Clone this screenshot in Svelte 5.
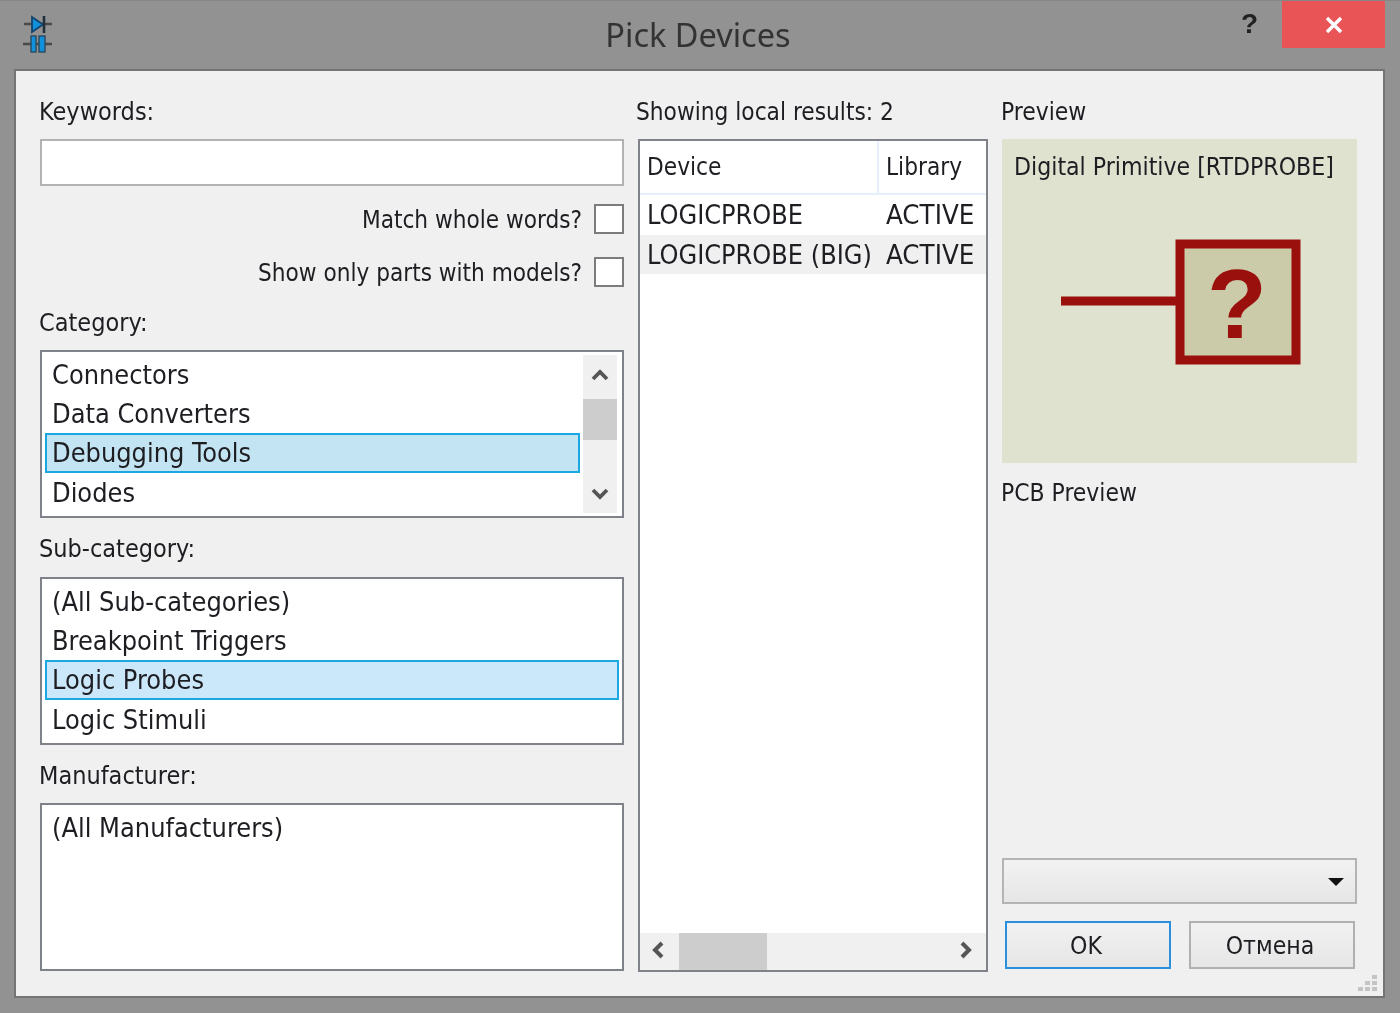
<script>
  const categories = ['Connectors', 'Data Converters', 'Debugging Tools', 'Diodes'];
  const subs = ['(All Sub-categories)', 'Breakpoint Triggers', 'Logic Probes', 'Logic Stimuli'];
</script>

<div class="screen">
  <header class="titlebar">
    <svg class="appicon" width="32" height="40" viewBox="0 0 32 40">
      <path d="M2 10H30M1 30H30" stroke="#4a4a4a" stroke-width="2.6" fill="none"/>
      <path d="M10 3L21 10.5L10 18Z" fill="#1190dc" stroke="#12456e" stroke-width="1.8"/>
      <path d="M22 2V19" stroke="#20303e" stroke-width="2.6"/>
      <rect x="9" y="22" width="5" height="16" fill="#1190dc" stroke="#2c4a60" stroke-width="1.4"/>
      <rect x="17" y="22" width="6" height="16" fill="#1190dc" stroke="#2c4a60" stroke-width="1.4"/>
    </svg>
    <h1>Pick Devices</h1>
    <span class="help">?</span>
    <button class="close" aria-label="Close">
      <svg width="20" height="20" viewBox="0 0 20 20"><path d="M3 3L17 17M17 3L3 17" stroke="#fff" stroke-width="3.4"/></svg>
    </button>
  </header>

  <main class="dialog">
    <section class="left">
      <div class="label">Keywords:</div>
      <input class="search" type="text" />
      <div class="check first"><span>Match whole words?</span><i class="box"></i></div>
      <div class="check second"><span>Show only parts with models?</span><i class="box"></i></div>

      <div class="label cat">Category:</div>
      <div class="list tight">
        <div class="rows narrow">
          {#each categories as c, i}
            <div class="row" class:sel={i === 2} class:selalt={i === 2}>{c}</div>
          {/each}
        </div>
        <div class="vscroll">
          <svg width="18" height="14" viewBox="0 0 18 14"><path d="M2 11L9 4L16 11" fill="none" stroke="#555" stroke-width="3.8"/></svg>
          <div class="vthumb"></div>
          <svg class="down" width="18" height="14" viewBox="0 0 18 14"><path d="M2 3L9 10L16 3" fill="none" stroke="#555" stroke-width="3.8"/></svg>
        </div>
      </div>

      <div class="label sub">Sub-category:</div>
      <div class="list">
        <div class="rows">
          {#each subs as s, i}
            <div class="row" class:sel={i === 2}>{s}</div>
          {/each}
        </div>
      </div>

      <div class="label man">Manufacturer:</div>
      <div class="list tight">
        <div class="rows"><div class="row">(All Manufacturers)</div></div>
      </div>
    </section>

    <section class="middle">
      <div class="label shift">Showing local results: 2</div>
      <div class="table">
        <div class="thead">
          <div class="c1">Device</div>
          <div class="c2">Library</div>
        </div>
        <div class="trow"><div class="c1">LOGICPROBE</div><div class="c2">ACTIVE</div></div>
        <div class="trow alt"><div class="c1">LOGICPROBE (BIG)</div><div class="c2">ACTIVE</div></div>
        <div class="tfill"></div>
        <div class="hscroll">
          <svg width="16" height="20" viewBox="0 0 16 20"><path d="M12 3L5 10L12 17" fill="none" stroke="#555" stroke-width="4"/></svg>
          <div class="hthumb"></div>
          <svg class="right-arrow" width="16" height="20" viewBox="0 0 16 20"><path d="M4 3L11 10L4 17" fill="none" stroke="#555" stroke-width="4"/></svg>
        </div>
      </div>
    </section>

    <section class="right">
      <div class="label">Preview</div>
      <div class="preview">
        <div class="ptitle">Digital Primitive [RTDPROBE]</div>
        <svg class="symbol" width="245" height="130" viewBox="0 0 245 130">
          <rect x="120" y="5" width="116" height="116" fill="#cbcbaa" stroke="#9a100c" stroke-width="9"/>
          <path d="M1 62H118" stroke="#9a100c" stroke-width="9"/>
          <text x="177" y="99" text-anchor="middle" class="q">?</text>
        </svg>
      </div>
      <div class="label pcb">PCB Preview</div>
      <div class="spacer"></div>
      <div class="combo"><i class="caret"></i></div>
      <div class="buttons">
        <button class="btn ok">OK</button>
        <button class="btn">Отмена</button>
      </div>
    </section>

    <svg class="grip" width="20" height="16" viewBox="0 0 20 16">
      <g fill="#c4c4c4">
        <rect x="14" y="0" width="5" height="4"/>
        <rect x="7" y="6" width="5" height="4"/><rect x="14" y="6" width="5" height="4"/>
        <rect x="0" y="12" width="5" height="4"/><rect x="7" y="12" width="5" height="4"/><rect x="14" y="12" width="5" height="4"/>
      </g>
    </svg>
  </main>
</div>

<style>
  :global(body) { margin: 0; background: #929292; }
  .screen {
    width: 1400px;
    height: 1013px;
    background: #929292;
    font-family: "DejaVu Sans", "Noto Sans", sans-serif;
    font-stretch: condensed;
    font-size: 25px;
    color: #1d1d22;
    overflow: hidden;
    display: flex;
    flex-direction: column;
    filter: blur(0.4px);
  }
  .titlebar {
    height: 69px;
    flex: none;
    position: relative;
    display: flex;
    justify-content: center;
    align-items: center;
    border-top: 1px solid #868686;
    box-sizing: border-box;
  }
  .appicon { position: absolute; left: 22px; top: 13px; }
  h1 {
    margin: -2px 0 0 -4px;
    font: 400 32.5px "Noto Sans", sans-serif;
    color: #333;
  }
  .help {
    position: absolute;
    left: 1241px;
    top: 7px;
    font: 700 28px "Liberation Sans", sans-serif;
    color: #222;
  }
  .close {
    position: absolute;
    left: 1282px;
    top: 0;
    width: 103px;
    height: 47px;
    padding: 0;
    border: none;
    background: #e95457;
    display: flex;
    align-items: center;
    justify-content: center;
  }
  .dialog {
    position: relative;
    flex: none;
    width: 1371px;
    height: 929px;
    margin-left: 14px;
    box-sizing: border-box;
    border: 2px solid #747474;
    background: #f0f0f0;
    padding: 25px 0 0 24px;
    display: grid;
    grid-template-columns: 584px 350px 356px;
    column-gap: 14px;
    grid-template-rows: 876px;
  }
  .left, .middle, .right { display: flex; flex-direction: column; min-width: 0; }
  .label { height: 32px; line-height: 32px; margin-left: -1px; flex: none; }
  .middle .label.shift { margin-left: -2px; font-size: 24.2px; }
  .right .label { margin-left: -1px; font-size: 24.4px; }
  .search {
    display: block;
    box-sizing: border-box;
    width: 584px;
    height: 47px;
    margin: 11px 0 0;
    border: 2px solid #b2b2b2;
    background: #fff;
    flex: none;
  }
  .check {
    display: flex;
    justify-content: flex-end;
    align-items: center;
    gap: 12px;
    height: 30px;
    flex: none;
    font-size: 24.1px;
  }
  .check span { padding-top: 2px; }
  .check.first { margin-top: 18px; }
  .check.second { margin-top: 23px; }
  .box {
    width: 30px;
    height: 30px;
    box-sizing: border-box;
    border: 2px solid #7c7c7c;
    background: #fff;
    flex: none;
  }
  .cat { margin-top: 20px; }
  .sub { margin-top: 15px; }
  .man { margin-top: 15px; }
  .list {
    position: relative;
    display: flex;
    box-sizing: border-box;
    height: 168px;
    margin-top: 12px;
    border: 2px solid #7f8389;
    background: #fff;
    padding: 3px;
    flex: none;
    font-size: 26.9px;
  }
  .list.tight { margin-top: 11px; }
  .rows { flex: 1; min-width: 0; }
  .rows.narrow { flex: none; width: 535px; }
  .row {
    box-sizing: border-box;
    height: 39.2px;
    line-height: 39px;
    padding-left: 7px;
  }
  .row.sel {
    background: #cbe7fa;
    outline: 2px solid #1aa7e2;
    outline-offset: -2px;
  }
  .row.selalt { background: #c3e4f2; }
  .vscroll {
    width: 34px;
    margin-left: 3px;
    background: #f0f0f0;
    display: flex;
    flex-direction: column;
    align-items: center;
    padding-top: 13px;
    box-sizing: border-box;
  }
  .vthumb { width: 100%; height: 41px; background: #cdcdcd; margin-top: 17px; }
  .vscroll .down { margin-top: auto; margin-bottom: 12px; }
  .table {
    box-sizing: border-box;
    flex: 1;
    margin-top: 11px;
    border: 2px solid #7f8389;
    background: #fff;
    display: flex;
    flex-direction: column;
    min-height: 0;
  }
  .thead {
    height: 52px;
    flex: none;
    display: flex;
    align-items: stretch;
    line-height: 52px;
    border-bottom: 2px solid #e6f0fa;
    font-size: 24.2px;
  }
  .thead .c1 { border-right: 2px solid #e6f0fa; box-sizing: border-box; }
  .c1 { width: 239px; padding-left: 7px; box-sizing: border-box; white-space: nowrap; }
  .c2 { padding-left: 7px; white-space: nowrap; }
  .trow { display: flex; height: 39.5px; line-height: 40px; flex: none; font-size: 26.8px; }
  .trow .c2 { padding-left: 7px; font-size: 27.4px; }
  .trow.alt { background: #f0f0f0; }
  .tfill { flex: 1; }
  .hscroll {
    height: 37px;
    flex: none;
    background: #f0f0f0;
    display: flex;
    align-items: center;
    padding-left: 10px;
    padding-right: 12px;
  }
  .hscroll svg { margin-top: -4px; }
  .hthumb { width: 88px; height: 100%; background: #cdcdcd; margin-left: 13px; }
  .right-arrow { margin-left: auto; }
  .preview {
    position: relative;
    box-sizing: border-box;
    height: 324px;
    width: 355px;
    margin-top: 11px;
    background: #e0e2d0;
    padding: 12px 0 0 12px;
    flex: none;
    font-size: 24.6px;
  }
  .ptitle { line-height: 32px; white-space: nowrap; }
  .symbol { position: absolute; left: 58px; top: 100px; }
  .q { font: 700 98px "Liberation Sans", sans-serif; fill: #9a100c; }
  .pcb { margin-top: 14px; }
  .spacer { flex: 1; }
  .combo {
    box-sizing: border-box;
    height: 46px;
    width: 355px;
    border: 2px solid #b4b4b4;
    background: linear-gradient(#f2f2f2, #e6e6e6);
    position: relative;
    flex: none;
  }
  .caret {
    position: absolute;
    right: 11px;
    top: 18px;
    border-left: 8px solid transparent;
    border-right: 8px solid transparent;
    border-top: 8px solid #111;
  }
  .buttons { display: flex; gap: 18px; margin: 17px 0 3px 3px; flex: none; }
  .btn {
    box-sizing: border-box;
    width: 166px;
    height: 48px;
    padding: 0 4px 0 0;
    border: 2px solid #b0b0b0;
    background: linear-gradient(#f1f1f1, #e6e6e6);
    font: inherit;
    font-size: 24.6px;
    font-stretch: condensed;
    color: #1d1d22;
  }
  .btn.ok { border-color: #2a8fdc; }
  .grip { position: absolute; right: 5px; bottom: 5px; }
</style>
